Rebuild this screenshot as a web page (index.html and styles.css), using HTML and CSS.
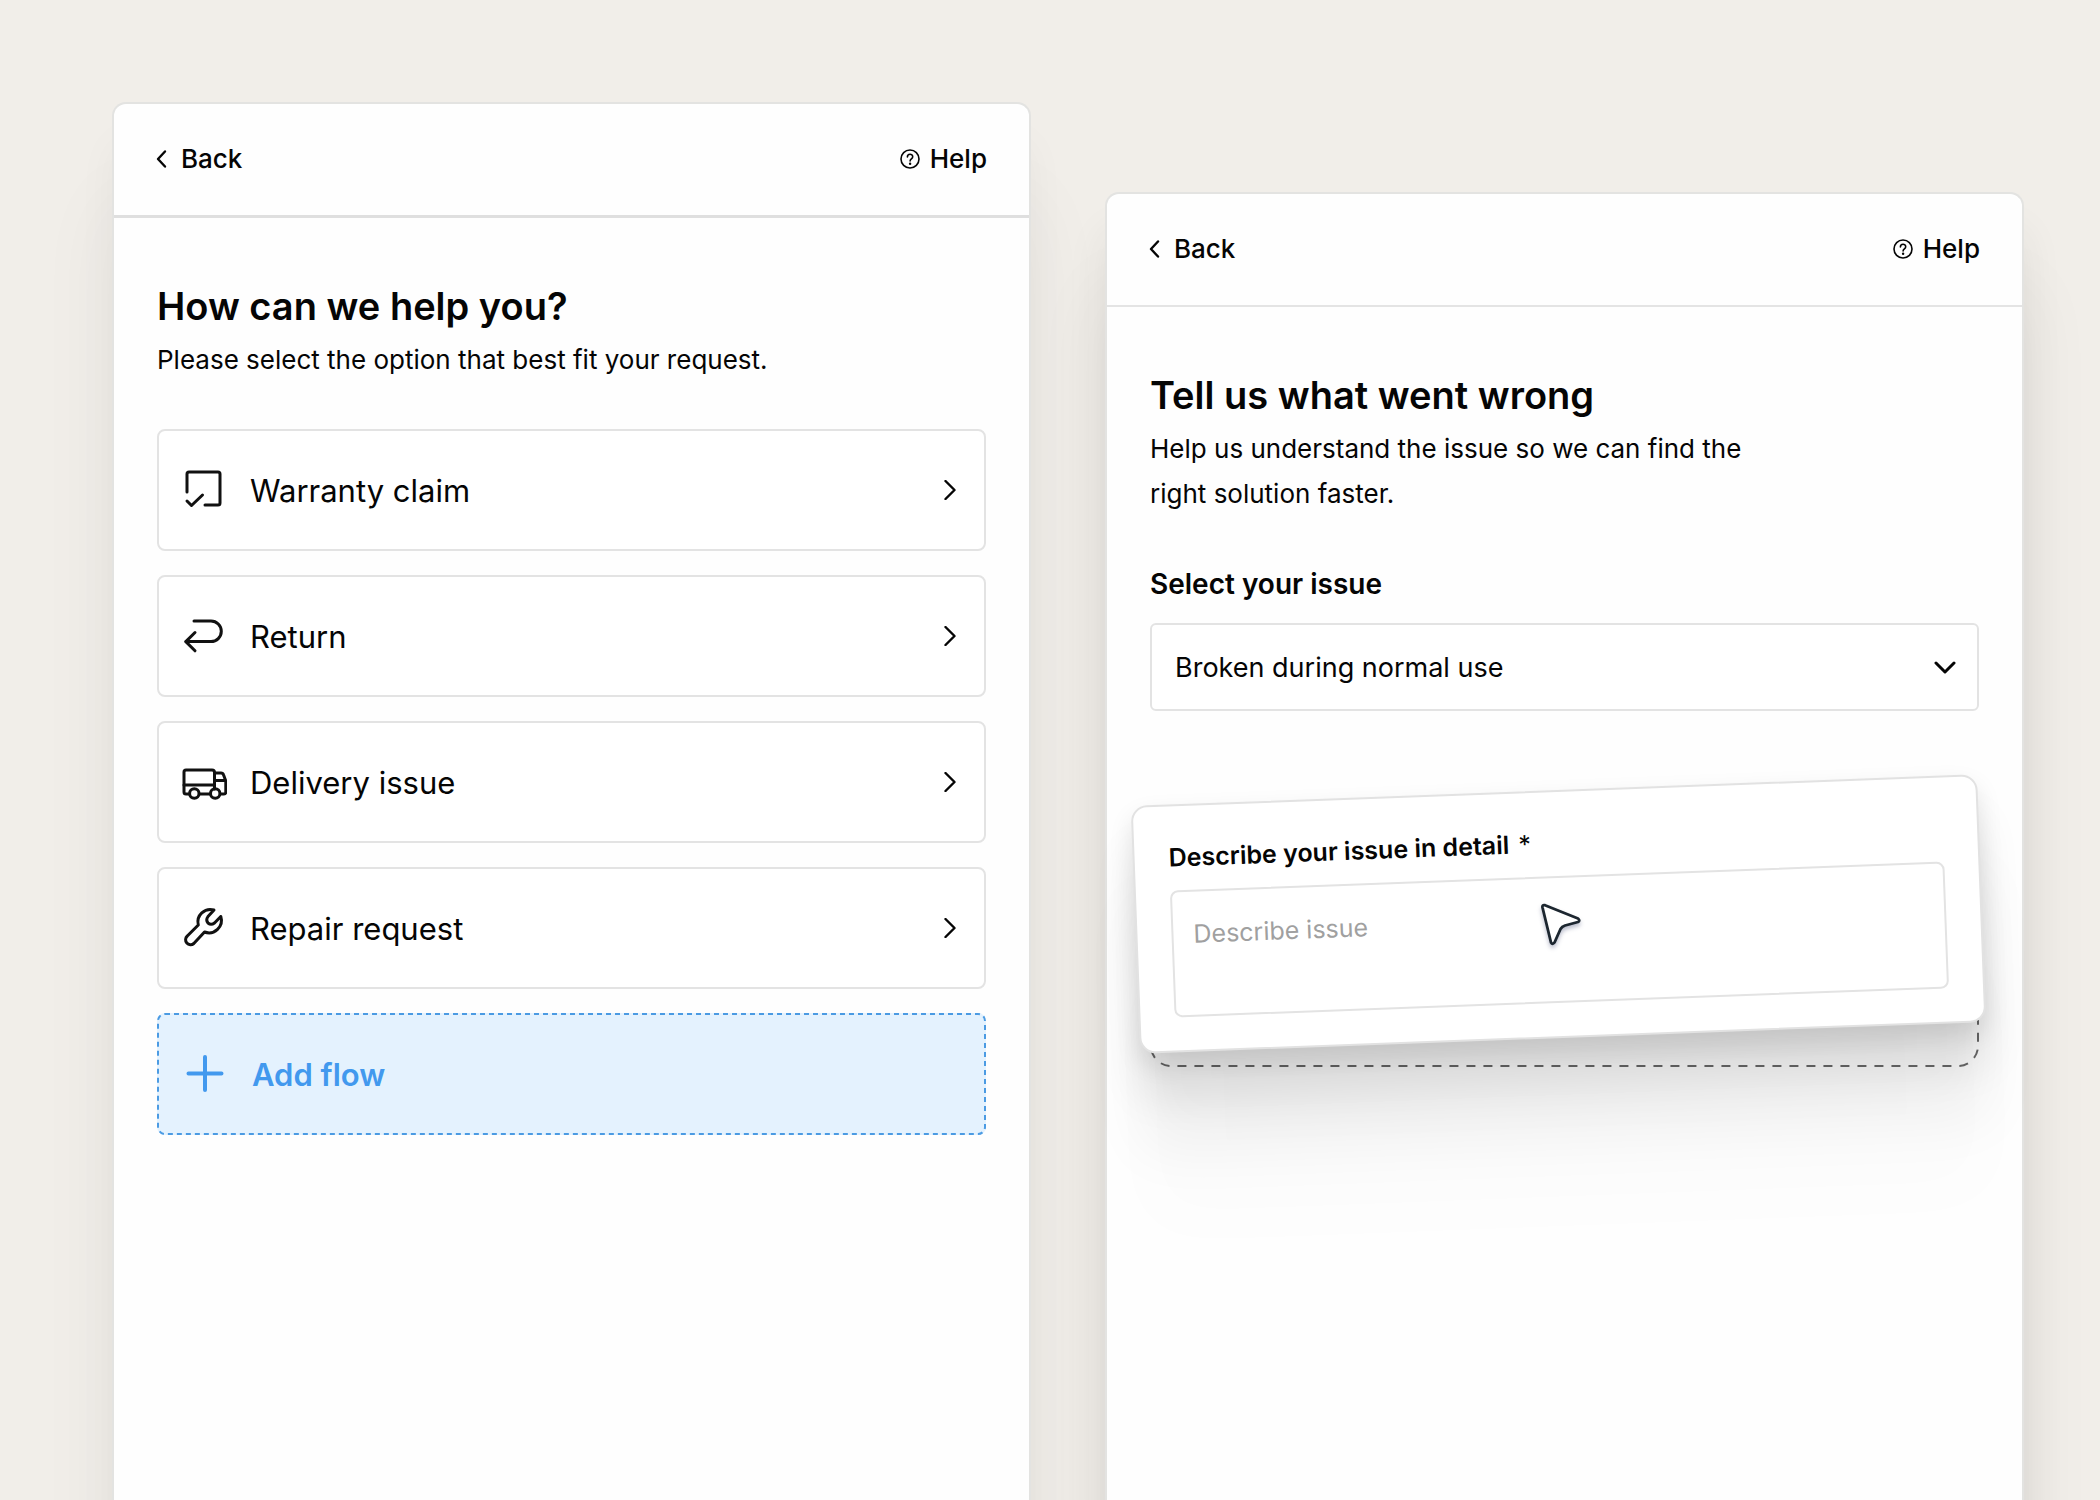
FILE: index.html
```html
<!DOCTYPE html>
<html lang="en">
<head>
    <meta charset="UTF-8">
    <meta name="viewport" content="width=device-width, initial-scale=1">
    <title>Customer support flows</title>
    <link rel="stylesheet" href="styles.css">
</head>
<body>

<main class="board">

    <section class="screen">
        <header class="screen-header screen-header-thick">
            <a href="#" class="nav-link nav-back">
                <svg class="back-icon" viewBox="0 0 12 20"><path d="M10 2.5 L3 10 L10 17.5"/></svg>
                Back
            </a>
            <a href="#" class="nav-link">
                <svg class="help-icon" viewBox="0 0 20 20">
                    <circle cx="10" cy="10" r="9"/>
                    <path d="M7.4 8 C7.4 4.3 12.7 4.4 12.7 7.7 C12.7 9.8 10.1 9.8 10.1 12"/>
                    <circle class="dot" cx="10.1" cy="14.7" r="1.2"/>
                </svg>
                Help
            </a>
        </header>
        <div class="screen-body">
            <h1 class="title">How can we help you?</h1>
            <p class="subtitle">Please select the option that best fit your request.</p>

            <div class="options">
                <button type="button" class="option">
                    <svg class="option-icon" viewBox="0 0 46 46">
                        <path d="M6 25 V7 Q6 5 8 5 H37 Q39 5 39 7 V36 Q39 38 37 38 H24"/>
                        <path d="M6 34 L10.500 38.500 L21.500 28"/>
                    </svg>
                    <span class="option-label">Warranty claim</span>
                    <svg class="go-icon" viewBox="0 0 12 20"><path d="M1.500 1 L10.500 10 L1.500 19"/></svg>
                </button>
                <button type="button" class="option">
                    <svg class="option-icon" viewBox="0 0 46 46">
                        <path d="M13 8 H30 A10.300 10.300 0 0 1 30 28.600 H5"/>
                        <path d="M14 19.500 L4.800 28.600 L14 37.800"/>
                    </svg>
                    <span class="option-label">Return</span>
                    <svg class="go-icon" viewBox="0 0 12 20"><path d="M1.500 1 L10.500 10 L1.500 19"/></svg>
                </button>
                <button type="button" class="option">
                    <svg class="option-icon" viewBox="0 0 46 46">
                        <path d="M8 35 H5 Q3 35 3 33 V13 Q3 11 5 11 H31 Q33.500 11 33.500 13.500 V30"/>
                        <path d="M3 26 H33.500"/>
                        <path d="M33.500 14 H40 Q42 14 42.600 16 L44.800 22 V33 Q44.800 35 43 35 H39.500"/>
                        <path d="M44 21.500 H35"/>
                        <path d="M18.500 35 H29"/>
                        <circle cx="13.300" cy="34.500" r="4.700"/>
                        <circle cx="34.200" cy="34.500" r="4.700"/>
                    </svg>
                    <span class="option-label">Delivery issue</span>
                    <svg class="go-icon" viewBox="0 0 12 20"><path d="M1.500 1 L10.500 10 L1.500 19"/></svg>
                </button>
                <button type="button" class="option">
                    <svg class="option-icon" viewBox="0 0 46 46">
                        <path d="M33 5 A12.500 12.500 0 0 0 17.300 20 L6.300 31 A4.600 4.600 0 0 0 12.800 38.500 L23.500 27 A12.500 12.500 0 0 0 39.800 11.500 L33.500 18 Q30 20.500 27 18 Q24.500 15 27 11.500 Z"/>
                    </svg>
                    <span class="option-label">Repair request</span>
                    <svg class="go-icon" viewBox="0 0 12 20"><path d="M1.500 1 L10.500 10 L1.500 19"/></svg>
                </button>
                <button type="button" class="option option-add">
                    <svg class="outline"><rect rx="7"/></svg>
                    <svg class="option-icon" viewBox="0 0 46 46"><path d="M24 6 V39 M7.500 22.500 H40.500"/></svg>
                    <span class="option-label">Add flow</span>
                </button>
            </div>
        </div>
    </section>

    <section class="screen screen-lower">
        <header class="screen-header">
            <a href="#" class="nav-link nav-back">
                <svg class="back-icon" viewBox="0 0 12 20"><path d="M10 2.5 L3 10 L10 17.5"/></svg>
                Back
            </a>
            <a href="#" class="nav-link">
                <svg class="help-icon" viewBox="0 0 20 20">
                    <circle cx="10" cy="10" r="9"/>
                    <path d="M7.4 8 C7.4 4.3 12.7 4.4 12.7 7.7 C12.7 9.8 10.1 9.8 10.1 12"/>
                    <circle class="dot" cx="10.1" cy="14.7" r="1.2"/>
                </svg>
                Help
            </a>
        </header>
        <div class="screen-body">
            <h1 class="title">Tell us what went wrong</h1>
            <p class="subtitle">Help us understand the issue so we can find the right solution faster.</p>

            <label class="field-label" for="issue">Select your issue</label>
            <div class="select-wrap">
                <select id="issue" class="select">
                    <option>Broken during normal use</option>
                    <option>Arrived damaged</option>
                    <option>Missing parts</option>
                </select>
                <svg class="select-icon" viewBox="0 0 22 14"><path d="M2 2 L11 11 L20 2"/></svg>
            </div>

            <div class="drop-slot">
                <svg class="outline"><rect rx="20"/></svg>
                <div class="drag-card">
                    <label class="drag-label" for="details">Describe your issue in detail <span class="required">*</span></label>
                    <textarea id="details" class="details" placeholder="Describe issue"></textarea>
                </div>
                <svg class="cursor" viewBox="0 0 44 46">
                    <path d="M2.500 4.500 Q2 1.500 5 2.200 L38 15.500 Q40.500 17.500 38 19 L25 22.500 Q22 23.500 20.500 26 L14.500 39.500 Q12.500 42 11 39.500 Z"/>
                </svg>
            </div>
        </div>
    </section>

</main>

</body>
</html>
```
FILE: styles.css
```css
* { box-sizing: border-box; }

body { margin: 0; background: #f1eee9; color: #050505; font-family: Inter, "Liberation Sans", sans-serif; font-size: 26px; overflow: hidden; }
button, select, textarea { font-family: inherit; color: inherit; }
a { color: inherit; text-decoration: none; }
svg { fill: none; stroke: currentColor; stroke-linecap: round; stroke-linejoin: round; flex: none; }

/* two phone screens side by side, running off the bottom */
.board { display: grid; grid-template-columns: 1fr 1fr; gap: 74px; min-height: 100vh; padding: 102px 76px 0 112px; }
.screen { background: #fefefe; border: 2px solid #e3e3e1; border-bottom: none; border-radius: 14px 14px 0 0; box-shadow: 0 40px 40px rgba(50, 50, 60, 0.04), 0 100px 80px rgba(50, 50, 60, 0.06); }
.screen-lower { margin-top: 90px; box-shadow: 0 40px 40px rgba(50, 50, 50, 0.08), 0 100px 70px rgba(50, 50, 50, 0.08); }

.screen-header { display: flex; justify-content: space-between; align-items: center; height: 113px; padding: 0 42px 2px 41px; border-bottom: 2px solid #e4e4e4; }
.screen-header-thick { height: 114px; border-bottom: 3px solid #dfdfdf; }
.nav-link { display: flex; align-items: center; gap: 10px; font-weight: 500; line-height: 32px; }
.nav-back { gap: 14px; }
.back-icon { width: 12px; height: 20px; stroke-width: 2.4; }
.help-icon { width: 20px; height: 20px; stroke-width: 1.6; }
.help-icon .dot { fill: currentColor; stroke: none; }

.screen-body { padding: 65px 43px 0; }
.title { margin: 0 0 8px; font-size: 38px; font-weight: 600; line-height: 46px; }
.subtitle { margin: 0; max-width: 620px; line-height: 45px; }

.options { display: grid; gap: 24px; margin-top: 47px; }
.option { position: relative; display: flex; align-items: center; height: 122px; padding: 0 28px 0 22px; background: #fff; border: 2px solid #e3e3e3; border-radius: 8px; font-size: 31px; text-align: left; cursor: pointer; }
.option-icon { width: 46px; height: 46px; margin-right: 23px; stroke: #111; stroke-width: 3; }
.option-label { flex: 1; }
.go-icon { width: 12px; height: 20px; stroke-width: 2.4; }

.option-add { background: #e4f2fe; border-color: transparent; color: #4299ee; font-weight: 600; }
.option-add .option-icon { margin-right: 25px; stroke: #4299ee; stroke-width: 4; }

.outline { position: absolute; inset: 0; width: 100%; height: 100%; }
.outline rect { x: 1px; y: 1px; width: calc(100% - 2px); height: calc(100% - 2px); stroke-linecap: butt; }
.option-add .outline { inset: -2px; width: calc(100% + 4px); height: calc(100% + 4px); stroke: #4b9be3; stroke-width: 2; stroke-dasharray: 5 4; }
.drop-slot .outline { stroke: #6a6a6a; stroke-width: 2; stroke-dasharray: 9 8; }

.field-label { display: block; margin-top: 50px; font-size: 28px; font-weight: 600; line-height: 36px; }
.select-wrap { position: relative; margin-top: 21px; }
.select { width: 100%; height: 88px; padding: 0 23px; appearance: none; background: #fff; border: 2px solid #e3e3e3; border-radius: 6px; font-size: 27px; }
.select-icon { position: absolute; right: 23px; top: 38px; width: 22px; height: 14px; stroke-width: 3; pointer-events: none; }

/* placeholder slot with the card being dragged over it */
.drop-slot { position: relative; height: 206px; margin-top: 150px; }
.drag-card { position: absolute; top: -71px; left: -15px; right: -3px; height: 248px; padding: 35px 34px 33px; display: flex; flex-direction: column; background: #fff; border: 2px solid #e2e2e2; border-radius: 16px; transform: rotate(-2.15deg); box-shadow: 0 11px 24px rgba(0, 0, 0, 0.1), 0 43px 43px rgba(0, 0, 0, 0.09), 0 97px 58px rgba(0, 0, 0, 0.05), 0 173px 69px rgba(0, 0, 0, 0.01); }
.drag-label { font-size: 25px; font-weight: 600; line-height: 32px; }
.required { margin-left: 3px; font-weight: 400; }
.details { flex: 1; margin-top: 17px; padding: 25px 20px; background: #fff; border: 2px solid #e3e3e3; border-radius: 8px; font-size: 25px; line-height: 34px; resize: none; }
.details::placeholder { color: #a0a0a0; }
.cursor { position: absolute; top: 42px; left: 47%; width: 44px; height: 46px; fill: #fff; stroke: #1d2730; stroke-width: 2.8; filter: drop-shadow(0 3px 2px rgba(30, 40, 90, 0.3)); }
```
